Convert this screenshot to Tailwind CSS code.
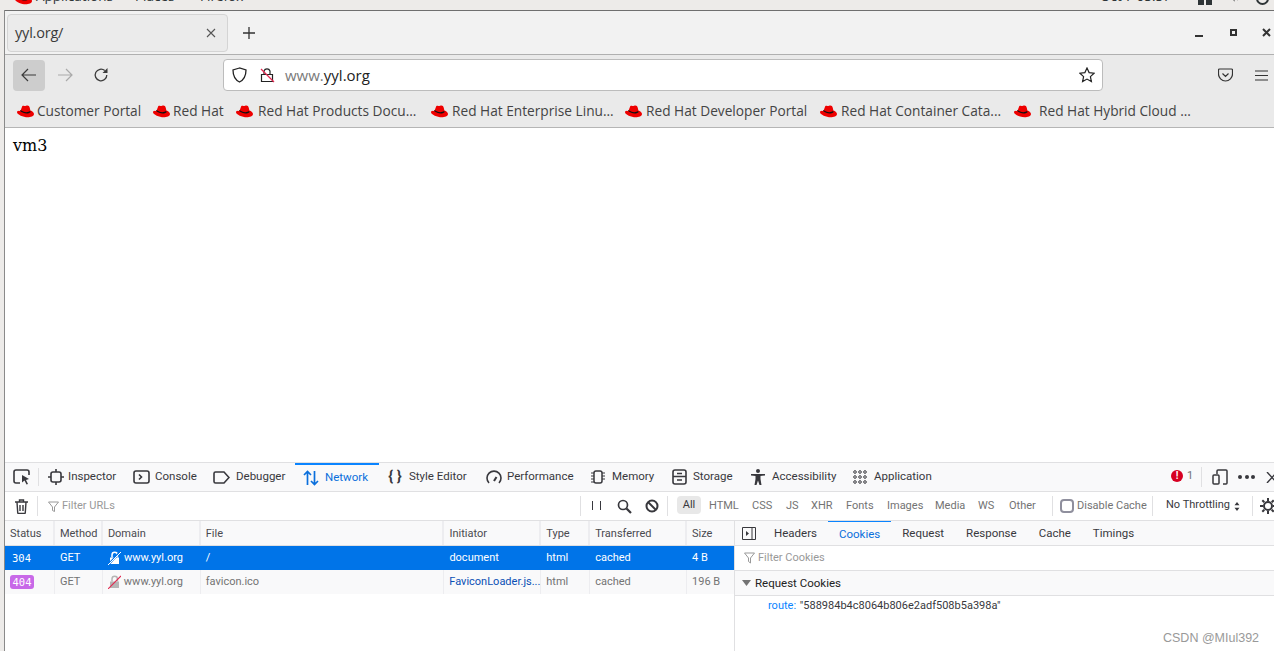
<!DOCTYPE html>
<html><head><meta charset="utf-8"><title>yyl.org/</title>
<script src="https://cdn.jsdelivr.net/npm/@tailwindcss/browser@4"></script></head>
<body class="m-0 w-[1274px] h-[651px] overflow-hidden bg-white relative font-['Open_Sans',sans-serif]">
<svg class="hidden"><defs>
<symbol id="hat" viewBox="0 0 16 12"><path fill="#e00" d="M5 .8C6.500 0 7.500 1 8.500.7 10.500 0 11.500.8 12 2.500L12.600 5C14.500 5.600 16 6.800 16 8.400 16 10.400 13 11.500 10 11.500 6 11.500 0 9 0 6.800 0 6 .5 5.500 1.200 5.300 2 5.800 3.200 5.600 3.500 4.800z"/><path fill="#111" d="M3.300 4.600C5.500 6.500 9.500 7.600 12.500 5.600l.3 1.200C10 9 5.500 7.800 3 5.600z"/></symbol>
</defs></svg>
<div class="h-[10px] bg-[#edebe9] relative overflow-hidden text-[13.500px] text-[#2e3436] leading-[20px] shrink-0">
  <svg class="absolute left-[15px] top-[-8px] w-[17px] h-[13px]"><use href="#hat"/></svg>
  <span class="absolute left-[36px] top-[-14px]">Applications</span>
  <span class="absolute left-[135px] top-[-14px]">Places</span>
  <span class="absolute left-[200px] top-[-14px]">Firefox</span>
  <span class="absolute left-[1100px] top-[-14px]">Oct 7  05:57</span>
  <div class="absolute left-[1198px] top-0 w-[6px] h-[5px] bg-[#2e3436]"></div>
  <div class="absolute left-[1206px] top-0 w-[6px] h-[5px] bg-[#2e3436]"></div>
  <svg class="absolute left-[1228px] top-[-4px]" width="14" height="8" fill="none" stroke="#777" stroke-width="1.500"><path d="M1 0v2h3l2 2V0M9 1c1 1 1 2 0 3"/></svg>
  <div class="absolute left-[1256px] top-[-8px] w-[13px] h-[13px] rounded-full border-2 border-[#2e3436]"></div>
</div>
<div class="flex h-[641px]">
  <div class="w-[5px] h-full bg-[#edebe9] border-r border-[#8a8a8a] shrink-0"></div>
  <div class="w-[1269px] flex flex-col overflow-hidden">
    <div class="h-[45px] bg-[#f2f2f2] border-t border-t-[#6f6f6f] border-b border-b-[#b0b0b0] flex items-center relative shrink-0">
      <div class="ml-[2px] w-[221px] h-[38px] bg-[#ebebeb] rounded border border-[#d4d4d4] flex items-center justify-between pl-[7px] pr-[11px] text-[#3b3b3b] text-[14.500px]">
        <span class="tracking-[-0.200px]">yyl.org/</span>
        <svg width="10" height="10" fill="none" stroke="#555" stroke-width="1.100"><path d="M1 1l8 8M9 1l-8 8"/></svg>
      </div>
      <svg class="ml-[14px]" width="14" height="14" fill="none" stroke="#333" stroke-width="1.300"><path d="M7 1v12M1 7h12"/></svg>
      <div class="ml-auto flex items-center">
        <div class="w-[8px] h-[2px] bg-[#333] mt-[7px]"></div>
        <div class="ml-[27px] w-[7px] h-[7px] border-2 border-[#333]"></div>
        <svg class="ml-[25px] mr-[3px]" width="9" height="9" fill="none" stroke="#333" stroke-width="2"><path d="M1 1l7 7M8 1l-7 7"/></svg>
      </div>
    </div>
    <div class="h-[73px] bg-[#eaeaea] border-b border-[#b5b5b5] shrink-0 flex flex-col">
      <div class="h-[40px] flex items-center relative">
        <div class="ml-[8px] w-[32px] h-[31px] rounded bg-[#cdcdcd] flex items-center justify-center">
          <svg width="16" height="14" fill="none" stroke="#3b3b3b" stroke-width="1.200"><path d="M15 7H1M7 1L1 7l6 6"/></svg>
        </div>
        <svg class="ml-[12px]" width="16" height="14" fill="none" stroke="#aaa" stroke-width="1.200"><path d="M1 7h14M9 1l6 6-6 6"/></svg>
        <svg class="ml-[20px]" width="16" height="16" fill="none" stroke="#3b3b3b" stroke-width="1.300"><path d="M13.800 8a5.800 5.800 0 1 1-2-4.400"/><path fill="#3b3b3b" stroke="none" d="M14.500 1v5h-5z"/></svg>
        <div class="ml-[114px] w-[880px] h-[32px] bg-white rounded border border-[#bcbcbc] flex items-center relative">
          <svg class="ml-[8px]" width="15" height="16" fill="none" stroke="#222" stroke-width="1.300"><path d="M7.500 1L1 3c0 6 1.500 9.500 6.500 12C12.500 12.500 14 9 14 3z"/></svg>
          <svg class="ml-[13px]" width="15" height="16" fill="none"><path stroke="#222" stroke-width="1.200" d="M1.500 7.500h11V14.500h-11zM4 7.500V4a3.200 3.200 0 0 1 6 0v3.500"/><path stroke="#e22850" stroke-width="1.300" d="M1 2l13 13"/></svg>
          <span class="ml-[10px] text-[15px] text-[#7a7a7a]">www.<span class="text-[#222]">yyl.org</span></span>
          <svg class="ml-auto mr-[7px]" width="16" height="16" fill="none" stroke="#222" stroke-width="1.200"><path d="M8 1l2.100 4.600 5 .6-3.700 3.400 1 5L8 12.100l-4.400 2.500 1-5L.9 6.200l5-.6z"/></svg>
        </div>
        <svg class="ml-[115px]" width="15" height="14" fill="none" stroke="#333" stroke-width="1.200"><path d="M1.500 1h12a1 1 0 0 1 1 1v4a7 7 0 0 1-14 0V2a1 1 0 0 1 1-1zM4.500 5.500l3 3 3-3"/></svg>
        <svg class="ml-[22px]" width="13" height="11" stroke="#333" stroke-width="1.200"><path d="M0 1h13M0 5.500h13M0 10h13"/></svg>
      </div>
      <div class="h-[32px] relative text-[13.700px] text-[#444] whitespace-nowrap flex items-center">
        <svg class="ml-[12px] w-[17px] h-[13px]"><use href="#hat"/></svg><span class="ml-[3px] w-[104px]">Customer Portal</span>
        <svg class="ml-[12px] w-[17px] h-[13px]"><use href="#hat"/></svg><span class="ml-[3px] w-[52px]">Red Hat</span>
        <svg class="ml-[11px] w-[17px] h-[13px]"><use href="#hat"/></svg><span class="ml-[5px] w-[160px] overflow-hidden">Red Hat Products Docu...</span>
        <svg class="ml-[13px] w-[17px] h-[13px]"><use href="#hat"/></svg><span class="ml-[4px] w-[160px]">Red Hat Enterprise Linu...</span>
        <svg class="ml-[13px] w-[17px] h-[13px]"><use href="#hat"/></svg><span class="ml-[4px] w-[162px]">Red Hat Developer Portal</span>
        <svg class="ml-[12px] w-[17px] h-[13px]"><use href="#hat"/></svg><span class="ml-[4px] w-[160px]">Red Hat Container Cata...</span>
        <svg class="ml-[13px] w-[17px] h-[13px]"><use href="#hat"/></svg><span class="ml-[8px] w-[154px]">Red Hat Hybrid Cloud ...</span>
      </div>
    </div>
    <div class="h-[334px] bg-white pl-[8px] pt-[8px] text-[16px] leading-[20px] text-black font-['DejaVu_Serif',serif] shrink-0">vm3</div>
    <div class="flex-1 flex flex-col text-[11.500px] font-['Roboto',sans-serif] text-[#38383d] whitespace-nowrap">
      <div class="h-[30px] bg-[#f9f9fa] border-t border-[#e0e0e2] border-b flex items-center shrink-0 relative">
        <svg class="ml-[8px]" width="18" height="16" fill="none" stroke="#38383d" stroke-width="1.600"><path d="M16 6V3a2 2 0 0 0-2-2H3a2 2 0 0 0-2 2v9a2 2 0 0 0 2 2h4"/><path fill="#38383d" stroke="none" d="M9 6l7 4-3 1 2 4-1.500.6-2-4-2.500 2z"/></svg>
        <div class="ml-[7px] w-px h-[18px] bg-[#e0e0e2]"></div>
        <svg class="ml-[9px]" width="16" height="16" fill="none" stroke="#38383d" stroke-width="1.600"><rect x="3" y="3" width="10" height="10" rx="2"/><path d="M8 0v3M8 13v3M0 8h3M13 8h3"/></svg>
        <span class="ml-[4px] w-[49px]">Inspector</span>
        <svg class="ml-[16px]" width="17" height="14" fill="none" stroke="#38383d" stroke-width="1.600"><rect x="1" y="1" width="15" height="12" rx="2"/><path d="M6 4.500L8.500 7 6 9.500"/></svg>
        <span class="ml-[5px] w-[42px]">Console</span>
        <svg class="ml-[16px]" width="17" height="13" fill="none" stroke="#38383d" stroke-width="1.600"><path d="M2.500 1H11l5 5.500L11 12H2.500A1.500 1.500 0 0 1 1 10.500v-8A1.500 1.500 0 0 1 2.500 1z"/></svg>
        <span class="ml-[6px] w-[51px]">Debugger</span>
        <div class="ml-[8px] w-[84px] h-[28px] -mt-px border-t-2 border-[#0a84ff] flex items-center text-[#0a6fdc]">
          <svg class="ml-[8px]" width="16" height="16" fill="none" stroke="#0a6fdc" stroke-width="1.700"><path d="M4.500 15V2M1 5l3.500-3.500L8 5M11.500 1v13M8 11l3.500 3.500L15 11"/></svg>
          <span class="ml-[6px]">Network</span>
        </div>
        <span class="ml-[8px] w-[16px] text-[15px] font-bold text-center leading-none -mt-[2px]">{ }</span>
        <span class="ml-[6px] w-[60px]">Style Editor</span>
        <svg class="ml-[17px]" width="16" height="14" fill="none" stroke="#38383d" stroke-width="1.600"><path d="M3 13A7 7 0 1 1 13 13"/><path d="M8 11l2.500-4" stroke-width="2"/></svg>
        <span class="ml-[5px] w-[67px]">Performance</span>
        <svg class="ml-[16px]" width="16" height="16" fill="none" stroke="#38383d" stroke-width="1.200"><rect x="4" y="2" width="8" height="12" rx="2" stroke-width="1.500"/><path d="M1 4h3M1 7h3M1 10h3M1 13h3M12 4h3M12 7h3M12 10h3"/></svg>
        <span class="ml-[6px] w-[43px]">Memory</span>
        <svg class="ml-[17px]" width="15" height="16" fill="none" stroke="#38383d" stroke-width="1.600"><rect x="1" y="1" width="13" height="14" rx="2"/><path d="M1 7.500h13M5 4.500h5M5 11h5"/></svg>
        <span class="ml-[6px] w-[41px]">Storage</span>
        <svg class="ml-[17px]" width="14" height="16" fill="#38383d"><circle cx="7" cy="2" r="2"/><path d="M0 5h14v1.500L9.500 7v3l1 6H8.500L7 11.500 5.500 16h-2l1-6V7L0 6.500z"/></svg>
        <span class="ml-[7px] w-[64px]">Accessibility</span>
        <svg class="ml-[17px]" width="14" height="14" fill="none" stroke="#38383d" stroke-width="1"><circle cx="2" cy="2" r="1.300"/><circle cx="7" cy="2" r="1.300"/><circle cx="12" cy="2" r="1.300"/><circle cx="2" cy="7" r="1.300"/><circle cx="7" cy="7" r="1.300"/><circle cx="12" cy="7" r="1.300"/><circle cx="2" cy="12" r="1.300"/><circle cx="7" cy="12" r="1.300"/><circle cx="12" cy="12" r="1.300"/></svg>
        <span class="ml-[7px] w-[58px]">Application</span>
        <div class="absolute left-[1166px] top-[7px] w-[12px] h-[12px] rounded-full bg-[#d70022] text-white text-[10px] font-bold leading-[12px] text-center">!</div>
        <span class="absolute left-[1182px] top-[5px] text-[11px] text-[#737373]">1</span>
        <div class="absolute left-[1196px] top-[4px] w-px h-[20px] bg-[#e0e0e2]"></div>
        <svg class="absolute left-[1207px] top-[6px]" width="16" height="16" fill="none" stroke="#38383d" stroke-width="1.500"><path d="M5 5V2a1 1 0 0 1 1-1h8a1 1 0 0 1 1 1v12a1 1 0 0 1-1 1h-3"/><rect x="1" y="6" width="6" height="9" rx="1"/></svg>
        <div class="absolute left-[1233px] top-[12px] flex gap-[2.500px]"><i class="block w-[4px] h-[4px] rounded-full bg-[#38383d]"></i><i class="block w-[4px] h-[4px] rounded-full bg-[#38383d]"></i><i class="block w-[4px] h-[4px] rounded-full bg-[#38383d]"></i></div>
        <svg class="absolute left-[1261px] top-[9px]" width="12" height="11" fill="none" stroke="#38383d" stroke-width="1.400"><path d="M1 0l10 11M11 0L1 11"/></svg>
      </div>
      <div class="h-[29px] bg-white border-b border-[#e0e0e2] flex items-center shrink-0 relative text-[#737373]">
        <svg class="ml-[10px]" width="13" height="15" fill="none" stroke="#38383d" stroke-width="1.400"><path d="M0 3h13M4.500 3V1h4v2M2 3l.7 10.500a1 1 0 0 0 1 1h5.600a1 1 0 0 0 1-1L11 3M5 6v6M8 6v6"/></svg>
        <div class="ml-[9px] w-px h-[20px] bg-[#e0e0e2]"></div>
        <svg class="ml-[10px]" width="11" height="11" fill="none" stroke="#999" stroke-width="1"><path d="M.5 1h10L6.500 6v4.500l-2-1V6z"/></svg>
        <span class="ml-[3px] text-[11px] text-[#999]">Filter URLs</span>
        <div class="absolute left-[575px] top-[4px] w-px h-[20px] bg-[#e0e0e2]"></div>
        <div class="absolute left-[587px] top-[9px] w-px h-[9px] bg-[#38383d]"></div>
        <div class="absolute left-[595px] top-[9px] w-px h-[9px] bg-[#38383d]"></div>
        <svg class="absolute left-[612px] top-[7px]" width="15" height="15" fill="none" stroke="#38383d" stroke-width="1.700"><circle cx="6" cy="6" r="4.500"/><path d="M9.500 9.500L14 14" stroke-width="2.200"/></svg>
        <svg class="absolute left-[640px] top-[7px]" width="14" height="14" fill="none" stroke="#38383d" stroke-width="2"><circle cx="7" cy="7" r="5.500"/><path d="M3 3l8 8"/></svg>
        <div class="absolute left-[662px] top-[4px] w-px h-[20px] bg-[#e0e0e2]"></div>
        <span class="absolute left-[672px] top-[4px] w-[24px] h-[18px] rounded-sm bg-[#e8e8e8] text-[#38383d] text-center text-[11px] leading-[18px]">All</span>
        <span class="absolute left-[704px] top-[6px] text-[11px]">HTML</span>
        <span class="absolute left-[747px] top-[6px] text-[11px]">CSS</span>
        <span class="absolute left-[781px] top-[6px] text-[11px]">JS</span>
        <span class="absolute left-[806px] top-[6px] text-[11px]">XHR</span>
        <span class="absolute left-[841px] top-[6px] text-[11px]">Fonts</span>
        <span class="absolute left-[882px] top-[6px] text-[11px]">Images</span>
        <span class="absolute left-[930px] top-[6px] text-[11px]">Media</span>
        <span class="absolute left-[973px] top-[6px] text-[11px]">WS</span>
        <span class="absolute left-[1004px] top-[6px] text-[11px]">Other</span>
        <div class="absolute left-[1047px] top-[4px] w-px h-[20px] bg-[#e0e0e2]"></div>
        <div class="absolute left-[1055px] top-[7px] w-[14px] h-[14px] rounded-sm border-2 border-[#8f8f9d] bg-white"></div>
        <span class="absolute left-[1072px] top-[6px] text-[11px]">Disable Cache</span>
        <div class="absolute left-[1147px] top-[4px] w-px h-[20px] bg-[#e0e0e2]"></div>
        <span class="absolute left-[1161px] top-[5px] text-[11px] text-[#38383d]">No Throttling</span>
        <svg class="absolute left-[1229px] top-[10px]" width="6" height="9" fill="#38383d"><path d="M3 0l2.500 3.300h-5zM3 9L.5 5.700h5z"/></svg>
        <div class="absolute left-[1247px] top-[4px] w-px h-[20px] bg-[#e0e0e2]"></div>
        <svg class="absolute left-[1255px] top-[6px]" width="16" height="16" fill="none" stroke="#38383d"><circle cx="8" cy="8" r="4" stroke-width="2"/><path stroke-width="2" d="M8 0v3M8 13v3M0 8h3M13 8h3M2.300 2.300l2 2M11.700 11.700l2 2M2.300 13.700l2-2M11.700 4.300l2-2"/></svg>
      </div>
      <div class="flex-1 flex min-h-0">
        <div class="w-[730px] shrink-0 border-r border-[#e0e0e2] flex flex-col text-[11px]">
          <div class="h-[25px] flex items-center bg-[#f9f9fa] border-b border-[#e0e0e2] text-[#4a4a4f] shrink-0">
            <div class="w-[50px] pl-[5px] h-full leading-[25px] border-r-2 border-[#ededf0]">Status</div>
            <div class="w-[48px] pl-[5px] h-full leading-[25px] border-r-2 border-[#ededf0]">Method</div>
            <div class="w-[98px] pl-[5px] h-full leading-[25px] border-r-2 border-[#ededf0]">Domain</div>
            <div class="w-[244px] pl-[5px] h-full leading-[25px] border-r-2 border-[#ededf0]">File</div>
            <div class="w-[97px] pl-[5px] h-full leading-[25px] border-r-2 border-[#ededf0]">Initiator</div>
            <div class="w-[49px] pl-[5px] h-full leading-[25px] border-r-2 border-[#ededf0]">Type</div>
            <div class="w-[97px] pl-[5px] h-full leading-[25px] border-r-2 border-[#ededf0]">Transferred</div>
            <div class="w-[47px] pl-[5px] h-full leading-[25px]">Size</div>
          </div>
          <div class="h-[24px] flex items-center bg-[#0074e8] text-white shrink-0 leading-[22px]">
            <div class="w-[50px] pl-[7px] font-['DejaVu_Sans_Mono',monospace] text-[10.500px]">304</div>
            <div class="w-[48px] pl-[5px]">GET</div>
            <div class="w-[98px] pl-[5px] flex items-center">
              <svg width="13" height="14" fill="none"><path fill="#fff" d="M2 6.500h9V13H2z"/><path stroke="#fff" stroke-width="1.500" d="M4 6.500V4a2.700 2.700 0 0 1 5.400 0v2.500"/><path stroke="#0074e8" stroke-width="2" d="M0 14L13 0"/><path stroke="#fff" d="M0 14L13 1"/></svg>
              <span class="ml-[3px]">www.yyl.org</span></div>
            <div class="w-[244px] pl-[5px]">/</div>
            <div class="w-[97px] pl-[5px]">document</div>
            <div class="w-[49px] pl-[5px]">html</div>
            <div class="w-[97px] pl-[5px]">cached</div>
            <div class="w-[47px] pl-[5px]">4 B</div>
          </div>
          <div class="h-[24px] flex items-center bg-[#f9f9fa] text-[#737373] shrink-0 leading-[24px]">
            <div class="w-[50px] pl-[5px] h-full border-r border-[#ededf0] flex items-center"><span class="w-[24px] h-[14px] rounded-[3px] bg-[#c869e8] text-white text-center font-['DejaVu_Sans_Mono',monospace] text-[10.500px] leading-[14px]">404</span></div>
            <div class="w-[48px] pl-[5px] h-full border-r border-[#ededf0]">GET</div>
            <div class="w-[98px] pl-[5px] h-full border-r border-[#ededf0] flex items-center">
              <svg width="13" height="14" fill="none"><path fill="#b5b5b5" d="M2 6.500h9V13H2z"/><path stroke="#b5b5b5" stroke-width="1.500" d="M4 6.500V4a2.700 2.700 0 0 1 5.400 0v2.500"/><path stroke="#e22850" stroke-width="1.100" d="M0 14L13 1"/></svg>
              <span class="ml-[3px]">www.yyl.org</span></div>
            <div class="w-[244px] pl-[5px] h-full border-r border-[#ededf0]">favicon.ico</div>
            <div class="w-[97px] pl-[5px] h-full border-r border-[#ededf0] text-[#0a4fb5]">FaviconLoader.js...</div>
            <div class="w-[49px] pl-[5px] h-full border-r border-[#ededf0]">html</div>
            <div class="w-[97px] pl-[5px] h-full border-r border-[#ededf0]">cached</div>
            <div class="w-[47px] pl-[5px] h-full">196 B</div>
          </div>
        </div>
        <div class="flex-1 flex flex-col min-w-0">
          <div class="h-[25px] flex items-center bg-[#f9f9fa] border-b border-[#e0e0e2] shrink-0 text-[11.500px] leading-[26px]">
            <svg class="ml-[7px]" width="14" height="13" fill="none" stroke="#38383d"><path d="M.5.500h13v12H.5zM10 .5v12"/><path fill="#38383d" stroke="none" d="M4 4l3 2.500L4 9z"/></svg>
            <span class="ml-[7px] px-[11px]">Headers</span>
            <div class="h-[25px] px-[11px] -mt-px border-t-2 border-[#0a84ff] text-center text-[#0a6fdc] leading-[24px]">Cookies</div>
            <span class="px-[11px]">Request</span>
            <span class="px-[11px]">Response</span>
            <span class="px-[11px]">Cache</span>
            <span class="px-[11px]">Timings</span>
          </div>
          <div class="h-[25px] flex items-center border-b border-[#e0e0e2] shrink-0 text-[11px] text-[#999]">
            <svg class="ml-[9px]" width="11" height="12" fill="none" stroke="#999"><path d="M.5 1h10L6.500 6v5l-2-1.500V6z"/></svg>
            <span class="ml-[3px]">Filter Cookies</span>
          </div>
          <div class="h-[25px] flex items-center bg-[#f9f9fa] border-b border-[#e0e0e2] shrink-0 text-[#222] text-[11.500px] leading-[26px]">
            <svg class="ml-[7px]" width="9" height="6" fill="#737373"><path d="M0 0h9L4.500 6z"/></svg>
            <span class="ml-[4px]">Request Cookies</span>
          </div>
          <div class="pl-[33px] pt-px text-[11px] leading-[18px]"><span class="text-[#0a84ff]">route:</span> <span class="text-[#38383d] ml-[1px]">"588984b4c8064b806e2adf508b5a398a"</span></div>
        </div>
      </div>
    </div>
  </div>
</div>
<div class="absolute left-[1163px] top-[629px] text-[12.500px] text-[#999] font-['Liberation_Sans',sans-serif]">CSDN @MIul392</div>
</body></html>
